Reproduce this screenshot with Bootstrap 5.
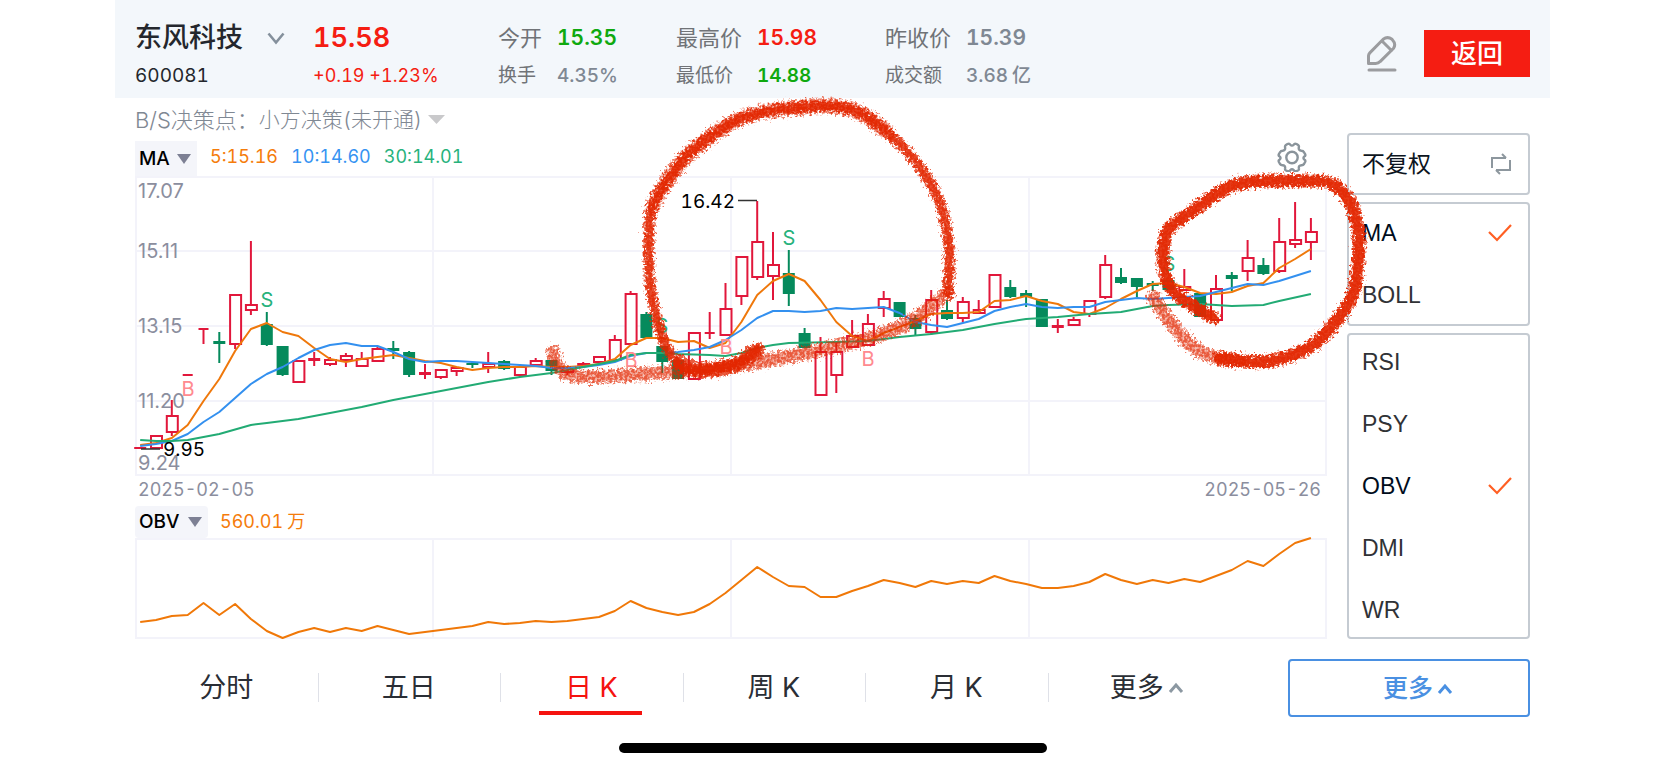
<!DOCTYPE html>
<html lang="zh-CN">
<head>
<meta charset="utf-8">
<meta name="viewport" content="width=device-width, initial-scale=1">
<title>东风科技 600081</title>
<link href="https://cdn.jsdelivr.net/npm/bootstrap@5.3.0/dist/css/bootstrap.min.css" rel="stylesheet">
<style>
:root{--red:#f51d12;--green:#0fa90f;--slate:#7f8893;--axis:#8b8e9e}
body{font-family:Inter,"Noto Sans CJK SC",sans-serif;font-variant-numeric:tabular-nums;background:#fff;color:#24272d;padding:0 115px;font-size:18px;line-height:24px}
button{font-family:inherit}
.quote-head{background:#f3f7fb;height:98px;padding:0 20px}
.quote-facts{padding-top:23px}
.head-actions{padding-top:9px}
.stock-col{width:178px}
.price-col{width:185px}
.open-col{width:178px}
.high-col{width:209px}
.line-a{height:30px;line-height:30px;font-size:21px}
.line-b{height:24px;line-height:24px;margin-top:11px;font-size:19px}
.line-a.stock-name{font-size:27px;font-weight:500}
.line-a.price-now{font-size:27px;font-weight:600}
.line-b.price-change{font-size:18px}
.fact-label{color:#707377;font-weight:400}
.line-a .fact-label{font-size:22px}
.line-a .fact-value,.line-b .fact-value{font-weight:600}
.line-b .fact-soft{font-weight:500}
.two-chars{width:59px}
.three-chars{width:81px}
.t-red{color:var(--red)}
.t-green{color:var(--green)}
.t-slate{color:var(--slate)}
.btn-back{width:106px;height:47px;background:var(--red);color:#fff;border:0;border-radius:0;font-size:26px;font-weight:500;padding:0;line-height:40px}
.plain-btn{background:none;border:0;padding:0;line-height:0}
.work-area{padding:0 20px;gap:18px}
.decision-row{height:43px;font-size:22px;color:var(--slate);font-weight:300}
.tool-select{appearance:none;border:0;background-color:transparent;background-repeat:no-repeat;color:inherit;font:inherit;padding:0}
.decision-select{font-size:21px;width:187px;background-image:url("data:image/svg+xml,%3Csvg xmlns='http://www.w3.org/2000/svg' width='17' height='9'%3E%3Cpath d='M0 0h17L8.5 9z' fill='%23c9c9cb'/%3E%3C/svg%3E");background-position:right 1px center}
.legend-row{height:35px;gap:13px}
.legend-row span{padding-bottom:3px}
.gear-btn{margin-right:22px;padding-bottom:4px}
.obv-row{height:32px;gap:12px}
.index-select{color:#000;font-size:19px;font-weight:500;background-color:#f4f5fa;padding-left:4px;background-image:url("data:image/svg+xml,%3Csvg xmlns='http://www.w3.org/2000/svg' width='14' height='10'%3E%3Cpath d='M0 0h14L7 10z' fill='%237d8094'/%3E%3C/svg%3E");background-position:right 6px center}
.ma-select{width:62px;height:35px}
.obv-select{width:73px;height:32px;border-radius:4px}
.c5{color:#f57c0b}.c10{color:#3693f2}.c30{color:#27b27c}
.plot{display:block;width:100%;height:auto;overflow:visible}
.axis-text{font-variant-numeric:normal}
.pen-layer{z-index:5;pointer-events:none}
.date-row{height:29px;line-height:25px;color:var(--axis);padding:0 8px 0 3px}
.side-panel{width:183px;padding-top:35px;gap:7px;font-family:"Liberation Sans","Noto Sans CJK SC",sans-serif;font-size:23px}
.option-box{border:2px solid #c5cbd2;border-radius:4px;padding:12px 16px 12px 13px;gap:28px;background:#fff}
.option-box label,.option-box button{height:34px;line-height:34px;color:#303236}
.option-box .adjust{color:#0c1420;font-size:23px}
.option-box svg{visibility:hidden}
.option-box .adjust svg,.option-box input:checked~svg{visibility:visible}
.option-box label:has(input:checked){color:#000c1c}
.long-box{padding-top:10px;padding-bottom:10px}
.period-row{padding:0 20px;margin-top:20px;gap:58px}
.period-tab{border:0;background:none;padding:0;height:58px;font-size:27px;color:#2a2e35;position:relative;font-weight:400}
.period-tab+.period-tab::before{content:"";position:absolute;left:0;top:14px;height:29px;width:1px;background:#dfe1e8}
.period-tab.active{color:#f5130f}
.period-tab.active::after{content:"";position:absolute;left:50%;top:52px;width:103px;margin-left:-52px;height:4px;background:#f5130f}
.btn-more{width:242px;height:58px;border:2px solid #4a90e2;border-radius:4px;background:#fff;color:#4a90e2;font-size:25px;font-weight:500;padding:0 0 0 18px}
.home-bar{width:428px;height:10px;border-radius:5px;background:#000;margin:26px auto 0}
</style>
</head>
<body>
<header class="quote-head d-flex">
  <div class="quote-facts d-flex flex-grow-1">
    <div class="stock-col">
      <div class="line-a d-flex align-items-center stock-name">东风科技
        <button class="plain-btn ms-4" aria-label="切换股票"><svg width="18" height="13" fill="none" stroke="#84909c" stroke-width="2.6"><path d="M1.5 1.5 9 10.500l7.500-9"/></svg></button></div>
      <div class="line-b">600081</div>
    </div>
    <div class="price-col t-red">
      <div class="line-a price-now">15.58</div>
      <div class="line-b price-change">+0.19 +1.23%</div>
    </div>
    <div class="open-col">
      <div class="line-a d-flex"><span class="fact-label two-chars">今开</span><span class="fact-value t-green">15.35</span></div>
      <div class="line-b d-flex"><span class="fact-label two-chars">换手</span><span class="fact-soft t-slate">4.35%</span></div>
    </div>
    <div class="high-col">
      <div class="line-a d-flex"><span class="fact-label three-chars">最高价</span><span class="fact-value t-red">15.98</span></div>
      <div class="line-b d-flex"><span class="fact-label three-chars">最低价</span><span class="fact-value t-green">14.88</span></div>
    </div>
    <div>
      <div class="line-a d-flex"><span class="fact-label three-chars">昨收价</span><span class="fact-value t-slate">15.39</span></div>
      <div class="line-b d-flex"><span class="fact-label three-chars">成交额</span><span class="fact-soft t-slate">3.68<span class="ps-1">亿</span></span></div>
    </div>
  </div>
  <div class="head-actions d-flex align-items-center gap-4 ms-auto">
    <button class="plain-btn" aria-label="编辑"><svg width="36" height="38" viewBox="1364 34 36 38" fill="none" stroke="#9b9c9f" stroke-width="3" stroke-linejoin="round" stroke-linecap="round"><path d="M1368.500 62.500v-7.500q0-1.800 1.300-3.100l13.400-13.700q4.300-3.200 8.800 0 4.400 4.800 1.600 9l-13.500 13.400q-1.700 1.900-4.400 1.900zM1382.500 40.500l9 9M1369 69h26"/></svg></button>
    <button class="btn-back">返回</button>
  </div>
</header>

<main>
<div class="work-area d-flex">
  <section class="flex-grow-1">
    <div class="decision-row d-flex align-items-center">
      <label for="decision">B/S决策点：</label>
      <select id="decision" class="tool-select decision-select"><option>小方决策(未开通)</option></select>
    </div>
    <div class="legend-row d-flex align-items-center">
      <select class="tool-select index-select ma-select" aria-label="主图指标"><option>MA</option><option>BOLL</option></select>
      <span class="c5">5:15.16</span><span class="c10">10:14.60</span><span class="c30">30:14.01</span>
      <button class="plain-btn gear-btn ms-auto" aria-label="设置"><svg width="30" height="30" viewBox="0 0 30 30" fill="none" stroke="#8a949b" stroke-width="2.400" stroke-linejoin="round" class="d-block"><path d="M10.500 2Q12.400 1 13.300 2.700 15 4.600 16.700 2.700 17.600 1 19.500 2l1.600 1q1.200.9.700 2.500-.5 3 2.600 3.300 1.900 0 2.500 1.400l1.200 1.900q.8 1.700-.8 2.400-1.700 1.500 0 3 1.600.9.800 2.500L27 22q-.8 1.300-2.500 1.200-3.100.2-2.600 3 .4 1.700-.9 2.300l-1.500.6q-1.900.7-2.800-1-1.700-1.700-3.400 0-.9 1.700-2.800 1L9 28.500q-1.300-.7-.9-2.300.4-2.900-2.600-3Q3.800 23.200 3 22L1.900 20q-.8-1.700.8-2.500 1.700-1.500 0-3-1.600-.8-.8-2.400l1.200-1.900q.7-1.400 2.500-1.400 3-.3 2.500-3.300Q7.700 3.900 8.900 3z"/><circle cx="15" cy="15.500" r="5.700"/></svg></button>
    </div>
    <div class="position-relative">
      <svg id="kline" class="plot" viewBox="135 176 1194 301" role="img" aria-label="日K线图"></svg>
      <svg id="pen" class="plot pen-layer position-absolute top-0 start-0" viewBox="135 176 1194 301" aria-hidden="true">
        <defs>
          <filter id="crayon" filterUnits="userSpaceOnUse" x="520" y="80" width="880" height="320">
            <feTurbulence type="fractalNoise" baseFrequency=".35" numOctaves="2" seed="4" result="n"/>
            <feDisplacementMap in="SourceGraphic" in2="n" scale="12" xChannelSelector="R" yChannelSelector="G"/>
            <feGaussianBlur stdDeviation=".6"/>
          </filter>
          <filter id="grain" filterUnits="userSpaceOnUse" x="520" y="80" width="880" height="320">
            <feTurbulence type="fractalNoise" baseFrequency=".4" numOctaves="2" seed="9" result="n"/>
            <feColorMatrix in="n" type="matrix" values="0 0 0 0 0  0 0 0 0 0  0 0 0 0 0  0 0 0 3.500 -1" result="a"/>
            <feDisplacementMap in="SourceGraphic" in2="n" scale="13" xChannelSelector="R" yChannelSelector="G" result="d"/>
            <feComposite in="d" in2="a" operator="in"/>
            <feGaussianBlur stdDeviation=".7"/>
          </filter>
        </defs>
      </svg>
    </div>
    <div class="date-row d-flex justify-content-between"><span>2025-02-05</span><span>2025-05-26</span></div>
    <div class="obv-row d-flex align-items-center">
      <select class="tool-select index-select obv-select" aria-label="副图指标"><option>OBV</option><option>RSI</option><option>PSY</option></select>
      <span class="c5">560.01<span class="ps-1">万</span></span>
    </div>
    <svg id="obv" class="plot" viewBox="135 538 1194 101" role="img" aria-label="OBV曲线"></svg>
  </section>

  <aside class="side-panel d-flex flex-column flex-shrink-0">
    <div class="option-box d-flex flex-column"><button class="plain-btn adjust d-flex align-items-center justify-content-between">不复权
      <svg width="22" height="22" fill="none" stroke="#8d979e" stroke-width="2"><path d="M2 15V5h14M12 1l4 4M20 7v10H6M10 21l-4-4"/></svg></button></div>
    <div class="option-box d-flex flex-column" id="mainBox"></div>
    <div class="option-box long-box d-flex flex-column" id="subBox"></div>
  </aside>
</div>

<div class="period-row d-flex">
  <nav class="d-flex flex-grow-1" aria-label="周期">
    <button class="period-tab col">分时</button>
    <button class="period-tab col">五日</button>
    <button class="period-tab col active">日 K</button>
    <button class="period-tab col">周 K</button>
    <button class="period-tab col">月 K</button>
    <button class="period-tab col"><span class="ps-3">更多<svg width="16" height="11" fill="none" stroke="#8c98a2" stroke-width="3" class="ms-1 mb-1"><path d="M2 10 8 3l6 7"/></svg></span></button>
  </nav>
  <button class="btn-more">更多<svg width="16" height="11" fill="none" stroke="#4a90e2" stroke-width="3" class="ms-1 mb-1"><path d="M2 10 8 3l6 7"/></svg></button>
</div>
<div class="home-bar"></div>
</main>

<script src="https://cdn.jsdelivr.net/npm/bootstrap@5.3.0/dist/js/bootstrap.bundle.min.js"></script>
<script>
const X = i => +(140.2 + i * 15.82).toFixed(1);
const line = (pts, color) => `<path d="M${pts.map(p => p.join(' ')).join('L')}" fill="none" stroke="${color}" stroke-width="2" stroke-linejoin="round"/>`;
const series = (arr, color) => line(arr.map((y, i) => [X(i), y]), color);

// Each candle: kind (u hollow, f filled red, d filled green), body top, body bottom, high, low
const candles = `f 447 449 447 449|u 436 448 436 448|u 416 432 400 436|f 374 376 374 376|f 328 330 328 344|d 341 344 332 363|u 295 344 295 349|u 305 310 241 315|d 324 345 312 346|d 346 375 346 376|u 361 382 361 382|f 358 361 352 366|u 360 364 357 366|u 356 360 353 367|u 359 366 352 366|u 349 361 346 361|d 348 351 341 359|d 352 375 351 377|f 372 375 364 379|u 370 377 370 379|u 368 371 368 376|d 363 365 362 368|u 364 367 352 373|d 361 369 360 370|u 367 375 367 377|u 361 365 358 366|d 360 371 360 375|u 368 372 368 375|u 364 366 362 367|u 357 362 356 362|u 340 360 335 360|u 294 344 291 344|d 314 338 312 338|d 346 362 346 373|d 360 379 360 379|u 333 379 333 379|f 332 333 312 339|u 309 335 283 335|u 257 296 257 305|u 242 277 201 280|u 265 276 232 300|d 273 294 250 306|d 333 348 328 348|u 352 395 337 395|u 352 375 343 393|u 336 347 320 347|u 324 345 314 345|u 299 308 291 317|d 302 317 302 317|d 318 329 315 335|u 300 332 290 335|d 310 319 300 320|u 302 318 297 322|u 310 313 300 314|u 275 307 275 307|d 287 297 280 298|d 293 297 290 307|d 299 327 299 327|f 325 328 319 333|u 320 325 317 326|u 301 314 301 317|u 265 297 255 299|d 277 283 268 284|d 278 287 278 297|d 283 286 281 291|d 280 290 280 290|u 287 290 269 291|d 293 317 293 317|u 289 320 275 320|d 275 279 272 291|u 258 271 240 281|d 265 274 258 275|u 242 271 218 273|u 240 244 202 248|u 232 242 218 260`.split('|').map(s => s.split(' '));
const ma5 = [445,443,438,425,401,379,351,329,323,332,336,348,359,362,359,357,355,358,361,363,367,370,368,367,367,366,367,367,366,364,359,345,338,338,342,341,348,343,322,295,281,274,281,300,322,336,341,333,327,321,314,313,313,312,301,300,296,301,304,312,314,308,299,291,284,283,287,293,294,292,286,283,268,259,249];
const ma10 = [446,444,441,434,422,412,398,384,374,367,358,350,345,343,346,346,352,359,362,361,361,362,363,364,365,366,368,368,367,365,362,356,353,353,352,350,347,340,330,318,311,311,312,311,308,309,308,307,313,322,325,327,323,319,311,307,304,307,308,307,307,302,300,298,299,298,297,296,292,288,284,285,281,276,271];
const ma30 = [[0,440],[1,441],[2,441],[3,440],[5,434],[7,425],[8,423],[10,419],[12,413],[14,407],[16,400],[18,394],[20,388],[22,382],[24,377],[26,373],[28,367],[30,361],[31,355],[32,353],[33,353],[34,354],[36,355],[37,356],[38,353],[39,348],[40,345],[41,343],[44,342],[46,341],[48,337],[50,334],[52,330],[54,324],[56,319],[58,317],[60,314],[62,312],[64,306],[65,305],[67,304],[69,306],[71,305],[72,301],[74,294]];
const obv = [622,620,616,615,603,615,604,619,631,638,632,628,632,628,631,626,630,634,632,630,628,626,622,624,623,621,622,621,619,617,611,601,608,612,615,612,604,593,580,567,577,586,587,597,597,591,586,580,583,587,581,584,581,583,576,581,584,588,588,586,582,574,580,584,580,583,579,582,576,570,561,566,554,543,538];

const grid = (top, bottom, rows) => {
  let s = `<g stroke="#f3f3fa" stroke-width="2" fill="none"><rect x="136" y="${top}" width="1190" height="${bottom - top}"/>`;
  for (const x of [433, 731, 1029]) s += `<path d="M${x} ${top}V${bottom}"/>`;
  for (const y of rows) s += `<path d="M136 ${y}H1326"/>`;
  return s + '</g>';
};
const text = (x, y, t, fill, anchor = 'start', size = 19, cls = '') => `<text x="${x}" y="${y}" fill="${fill}" text-anchor="${anchor}" font-size="${size}" class="${cls}">${t}</text>`;

let k = grid(177, 475, [251, 326, 401]);
for (const [y, t] of [[198, '17.07'], [258, '15.11'], [333, '13.15'], [408, '11.20'], [470, '9.24']]) k += text(138, y, t, '#8b8e9e', 'start', 20, 'axis-text');
candles.forEach(([kind, t, b, h, l], i) => {
  const x = X(i), c = kind === 'd' ? '#058a5c' : '#e1173b', w = i === 3 || i === 4 || i === 36 ? 10 : 12;
  t = +t; b = +b; h = +h; l = +l;
  if (h < t) k += `<path d="M${x} ${h}V${t}" stroke="${c}" stroke-width="2"/>`;
  if (l > b) k += `<path d="M${x} ${b}V${l}" stroke="${c}" stroke-width="2"/>`;
  if (kind === 'u') k += `<rect x="${x - 5}" y="${t}" width="11" height="${b - t}" fill="#fff" stroke="${c}" stroke-width="2"/>`;
  else k += `<rect x="${x - w / 2}" y="${t}" width="${w}" height="${Math.max(b - t, 2)}" fill="${c}"/>`;
});
k += series(ma5, '#ef780b') + series(ma10, '#3390ef') + line(ma30.map(([i, y]) => [X(i), y]), '#22ab74');
for (const [x, y] of [[267, 307], [662, 333], [789, 245], [1169, 271]]) k += text(x, y, 'S', '#27b27c', 'middle', 20);
for (const [x, y] of [[188, 396], [631, 367], [726, 354], [868, 366]]) k += text(x, y, 'B', '#ff8a8f', 'middle', 20);
k += '<path d="M738 200.500H757M141 449H160" stroke="#333" stroke-width="1.500"/>' + text(735, 208, '16.42', '#000', 'end') + text(163, 456, '9.95', '#000');
document.getElementById('kline').innerHTML = k;
document.getElementById('obv').innerHTML = grid(539, 638, []) + series(obv, '#f07808');

// Hand-drawn marks: smooth curve through the pen points
const smooth = p => {
  let d = `M${p[0]}`;
  for (let i = 0; i < p.length - 1; i++) {
    const a = p[i - 1] || p[i], b = p[i], c = p[i + 1], e = p[i + 2] || c;
    d += `C${b[0] + (c[0] - a[0]) / 6} ${b[1] + (c[1] - a[1]) / 6} ${c[0] - (e[0] - b[0]) / 6} ${c[1] - (e[1] - b[1]) / 6} ${c[0]} ${c[1]}`;
  }
  return d;
};
const loop1 = [[948,293],[949,247],[940,203],[917,163],[887,132],[860,113],[833,106],[807,107],[770,111],[737,120],[703,142],[683,160],[663,187],[652,208],[649,230],[649,267],[652,297],[662,337],[675,360],[688,371],[710,369],[735,364],[757,350]];
const arc1 = loop1.slice(4, 14);
const heavy = [[680,363],[700,370],[725,368],[742,361],[757,350]];
const smear = [[553,352],[557,365],[568,374],[590,377],[630,375],[673,372],[703,370],[770,360],[820,350],[873,337],[910,322],[930,307],[948,293]];
const loop2 = [[1213,318],[1200,310],[1180,297],[1168,283],[1163,260],[1165,237],[1173,225],[1197,208],[1223,190],[1247,182],[1277,181],[1307,181],[1330,183],[1347,197],[1355,215],[1359,240],[1357,273],[1352,297],[1337,320],[1317,342],[1297,353],[1270,361],[1240,361],[1220,358]];
const tail2 = [[1240,361],[1213,357],[1193,347],[1177,330],[1163,312],[1153,297]];
const pen = (pts, w, f, o) => `<path d="${smooth(pts)}" fill="none" stroke="#e32803" stroke-width="${w}" stroke-linecap="round" stroke-linejoin="round" opacity="${o}" filter="url(#${f})"/>`;
document.getElementById('pen').insertAdjacentHTML('beforeend',
  pen(smear, 14, 'grain', .65) + pen(smear, 10, 'crayon', .3) +
  pen(arc1, 15, 'grain', .6) + pen(arc1, 12, 'crayon', .3) +
  pen(loop1, 11, 'grain', .7) + pen(loop1, 8, 'crayon', .8) + pen(heavy, 15, 'crayon', .75) +
  pen(tail2, 14, 'grain', .65) + pen(tail2, 10, 'crayon', .3) + pen(loop2, 13, 'grain', .7) + pen(loop2, 11, 'crayon', .9));

const tick = '<svg width="24" height="18" fill="none" stroke="#ff5f23" stroke-width="2.200"><path d="m1 8 8 8L23 1"/></svg>';
const fill = (id, names, on) => document.getElementById(id).innerHTML = names.map(n =>
  `<label class="d-flex align-items-center justify-content-between">${n}<input type="checkbox" class="visually-hidden" ${n === on ? 'checked' : ''}>${tick}</label>`).join('');
fill('mainBox', ['MA', 'BOLL'], 'MA');
fill('subBox', ['RSI', 'PSY', 'OBV', 'DMI', 'WR'], 'OBV');
</script>
</body>
</html>
